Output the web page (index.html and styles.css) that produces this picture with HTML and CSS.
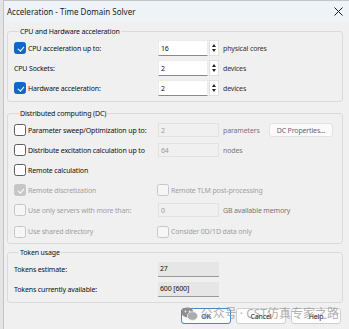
FILE: index.html
```html
<!DOCTYPE html>
<html>
<head>
<meta charset="utf-8">
<link rel="stylesheet" href="styles.css">
</head>
<body>
<div class="window">
  <div class="titlebar">
    <span class="title">Acceleration - Time Domain Solver</span>
    <svg class="close" width="9" height="9" viewBox="0 0 9 9"><path d="M0.5 0.5L8.5 8.5M8.5 0.5L0.5 8.5" stroke="#1a1a1a" stroke-width="1"/></svg>
  </div>
  <div class="content">
    <fieldset class="group">
      <legend>CPU and Hardware acceleration</legend>
      <div class="grid g3">
        <label class="chk"><span class="box on"></span>CPU acceleration up to:</label>
        <div class="spin"><span class="field">16</span><span class="arrows"><i class="up"></i><i class="down"></i></span></div>
        <span class="unit">physical cores</span>

        <span class="lbl">CPU Sockets:</span>
        <div class="spin"><span class="field">2</span><span class="arrows"><i class="up"></i><i class="down"></i></span></div>
        <span class="unit">devices</span>

        <label class="chk"><span class="box on"></span>Hardware acceleration:</label>
        <div class="spin"><span class="field">2</span><span class="arrows"><i class="up"></i><i class="down"></i></span></div>
        <span class="unit">devices</span>
      </div>
    </fieldset>

    <fieldset class="group">
      <legend>Distributed computing (DC)</legend>
      <div class="grid dc">
        <label class="chk"><span class="box"></span>Parameter sweep/Optimization up to:</label>
        <span class="dfield">2</span>
        <span class="unit">parameters</span>
        <span class="btn dis">DC Properties...</span>

        <label class="chk"><span class="box"></span>Distribute excitation calculation up to</label>
        <span class="dfield">64</span>
        <span class="unit">nodes</span>
        <span></span>

        <label class="chk full"><span class="box"></span>Remote calculation</label>

        <label class="chk dis"><span class="box on"></span>Remote discretization</label>
        <label class="chk dis span"><span class="box"></span>Remote TLM post-processing</label>

        <label class="chk dis"><span class="box"></span>Use only servers with more than:</label>
        <span class="dfield">0</span>
        <span class="unit dtxt span2">GB available memory</span>

        <label class="chk dis last"><span class="box"></span>Use shared directory</label>
        <label class="chk dis span last"><span class="box"></span>Consider 0D/1D data only</label>
      </div>
    </fieldset>

    <fieldset class="group tok">
      <legend>Token usage</legend>
      <div class="grid g3">
        <span class="lbl">Tokens estimate:</span>
        <span class="rfield">27</span>
        <span></span>
        <span class="lbl">Tokens currently available:</span>
        <span class="rfield">600 [600]</span>
        <span></span>
      </div>
    </fieldset>

    <div class="buttons">
      <span class="btn def">OK</span>
      <span class="btn">Cancel</span>
      <span class="btn">Help</span>
    </div>
  </div>
  <div class="watermark">
    <svg width="17" height="14" viewBox="0 0 17 14"><ellipse cx="6.5" cy="5.5" rx="6" ry="5" fill="#8e8e8e"/><ellipse cx="11.5" cy="9" rx="5.2" ry="4.3" fill="#acacac" stroke="#f0f0f0" stroke-width="0.8"/><circle cx="4.5" cy="4.5" r="0.9" fill="#f0f0f0"/><circle cx="8.5" cy="4.5" r="0.9" fill="#f0f0f0"/></svg>
    <span>公众号 · CST仿真专家之路</span>
  </div>
</div>
</body>
</html>
```
FILE: styles.css
```css
* { box-sizing: border-box; }
html, body { margin: 0; padding: 0; }
body {
  width: 349px;
  height: 329px;
  overflow: hidden;
  background: #e4e4e4;
  font-family: "Noto Sans", "Noto Sans CJK SC", sans-serif;
  font-size: 7px;
  letter-spacing: -0.15px;
  color: #111;
}
.window {
  position: relative;
  margin-left: 3px;
  width: 346px;
  height: 329px;
  background: #f0f0f0;
  border-left: 1px solid #c4c4c4;
  border-top: 1px solid #c4c4c4;
}
.titlebar {
  height: 21px;
  background: #eef3f8;
  display: flex;
  align-items: center;
  justify-content: space-between;
  padding: 0 6px 0 3px;
}
.title {
  font-size: 8px;
  letter-spacing: 0;
  color: #1a1a1a;
}
.close { display: block; }
.content {
  padding: 4px 6px 0 3px;
  display: flex;
  flex-direction: column;
}
.group {
  margin: 0;
  padding: 3px 0 5px 6px;
  border: 1px solid #dadada;
  border-radius: 3px;
  min-width: 0;
}
.group + .group { margin-top: 6px; }
.group.tok { margin-top: 3px; }
legend {
  padding: 0 1px;
  margin-left: 5px;
  line-height: 11px;
}
.grid {
  display: grid;
  grid-auto-rows: 16px;
  row-gap: 4px;
  align-items: center;
}
.grid.g3 { grid-template-columns: 144px 61px 1fr; }
.grid.dc { grid-template-columns: 144px 61px 50px 1fr; }
.chk {
  display: flex;
  align-items: center;
  gap: 2px;
  white-space: nowrap;
}
.chk.full { grid-column: 1 / -1; }
.chk.span { grid-column: 2 / -1; margin-left: -1px; }
.chk.last { margin-top: 3px; }
.span2 { grid-column: 3 / -1; }
.lbl { white-space: nowrap; }
.box {
  width: 12px;
  height: 12px;
  border: 1px solid #5e5e5e;
  border-radius: 2.5px;
  background: #fdfdfd;
  flex: none;
  position: relative;
}
.box.on {
  background: #1565c8;
  border-color: #1565c8;
}
.box.on::after {
  content: "";
  position: absolute;
  left: 3.5px;
  top: 1.5px;
  width: 2.5px;
  height: 5px;
  border-right: 1px solid #fff;
  border-bottom: 1px solid #fff;
  transform: rotate(40deg);
}
.dis { color: #a0a0a0; }
.dis .box { border-color: #c6c6c6; background: #f6f6f6; }
.dis .box.on { background: #c6c6c6; border-color: #c6c6c6; }
.spin {
  display: flex;
  height: 16px;
  width: 61px;
}
.field {
  width: 51px;
  height: 16px;
  background: #fff;
  border: 1px solid #ececec;
  border-bottom: 1px solid #8a8a8a;
  padding-left: 2px;
  display: flex;
  align-items: center;
}
.arrows {
  width: 10px;
  height: 16px;
  margin-left: 1px;
  background: #fff;
  border: 1px solid #e2e2e2;
  display: flex;
  flex-direction: column;
  justify-content: center;
  align-items: center;
  gap: 2px;
}
.arrows i {
  width: 0;
  height: 0;
  border-left: 2.5px solid transparent;
  border-right: 2.5px solid transparent;
}
.arrows .up { border-bottom: 3px solid #222; }
.arrows .down { border-top: 3px solid #222; }
.unit { padding-left: 4px; white-space: nowrap; color: #333; }
.dc .unit { color: #777; }
.dtxt { color: #8a8a8a; }
.dfield {
  width: 61px;
  height: 14px;
  border: 1px solid #e2e2e2;
  padding-left: 2px;
  color: #9a9a9a;
  display: flex;
  align-items: center;
}
.rfield {
  width: 61px;
  height: 15px;
  background: #e6e6e6;
  border-bottom: 1px solid #9a9a9a;
  padding-left: 2px;
  display: flex;
  align-items: center;
}
.btn {
  display: flex;
  align-items: center;
  justify-content: center;
  height: 14px;
  border: 1px solid #e2e2e2;
  border-radius: 3px;
  background: #fbfbfb;
  white-space: nowrap;
}
.btn.dis { width: 64px; color: #666; }
.buttons {
  display: flex;
  justify-content: flex-end;
  gap: 5px;
  margin-top: 5px;
  padding-right: 2px;
}
.buttons .btn {
  width: 50px;
  height: 16px;
  background: #fdfdfd;
  border: 1px solid #d0d0d0;
}
.buttons .btn.def {
  border: 1.5px solid #4a86c8;
}
.watermark {
  position: absolute;
  right: 10px;
  top: 305px;
  display: flex;
  align-items: center;
  gap: 3px;
  font-size: 12px;
  letter-spacing: 0;
  line-height: 16px;
  color: rgba(140, 140, 140, 0.7);
  pointer-events: none;
}
```
